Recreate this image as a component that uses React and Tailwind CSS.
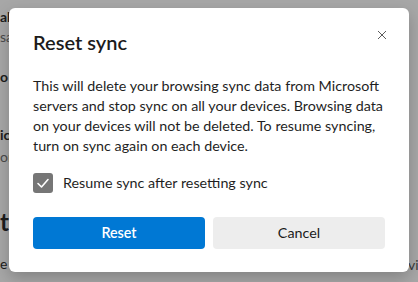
import React, { useState } from 'react';

function CloseIcon() {
  return (
    <svg width="10" height="10" viewBox="0 0 10 10" fill="none">
      <path d="M1 1L9 9M9 1L1 9" stroke="#5c5c5c" strokeWidth="1" />
    </svg>
  );
}

function CheckIcon() {
  return (
    <svg width="14" height="14" viewBox="0 0 14 14" fill="none">
      <path d="M2 7.5L5.5 11L12 3.5" stroke="#ffffff" strokeWidth="1.6" strokeLinecap="round" strokeLinejoin="round" />
    </svg>
  );
}

export default function App() {
  const [resume, setResume] = useState(true);

  return (
    <div
      className="relative h-[282px] w-[418px] overflow-hidden bg-[#a7a7a7]"
      style={{ fontFamily: 'Lato, "Noto Sans", sans-serif' }}
    >
      {/* Settings page behind the overlay */}
      <div className="flex flex-col text-[14px] leading-[20px]">
        <div className="mt-[7px] font-bold text-[#1c1c1c]">al</div>
        <div className="text-[#4a4a4a]">sa</div>
        <div className="mt-[20px] font-bold text-[#1c1c1c]">o</div>
        <div className="mt-[4px] pl-[10px] text-[#4a4a4a]">P</div>
        <div className="mt-[14px] font-bold text-[#1c1c1c]">ic</div>
        <div className="mt-[2px] text-[#4a4a4a]">or</div>
        <div className="mt-[40px] text-[24px] leading-[30px] font-bold text-[#1c1c1c]">t</div>
        <div className="mt-[17px] text-[#1c1c1c]">e</div>
      </div>
      <div className="absolute left-[408px] top-[255px] text-[14px] leading-[20px] text-[#3a3a3a]">vi</div>

      {/* Dialog */}
      <div className="absolute left-[9px] top-[8px] w-[400px] rounded-[6px] bg-white px-[24px] pt-[20px] pb-[23px] shadow-[0_6px_16px_rgba(0,0,0,0.22)]">
        <button className="absolute right-[14px] top-[14px] flex h-[26px] w-[26px] items-center justify-center">
          <CloseIcon />
        </button>

        <h2 className="text-[20px] leading-[28px] font-semibold text-[#1b1b1b]">Reset sync</h2>

        <p className="mt-[20px] text-[14.3px] leading-[20px] text-[#1f1f1f]">
          This will delete your browsing sync data from Microsoft servers and stop sync on all your devices. Browsing data on your devices will not be deleted. To resume syncing, turn on sync again on each device.
        </p>

        <label className="mt-[17px] flex items-center gap-[10px] text-[14.3px] leading-[20px] text-[#1f1f1f]">
          <button
            onClick={() => setResume(!resume)}
            className={`flex h-[20px] w-[20px] items-center justify-center rounded-[3px] ${resume ? 'bg-[#767676]' : 'border border-[#767676] bg-white'}`}
          >
            {resume && <CheckIcon />}
          </button>
          <span>Resume sync after resetting sync</span>
        </label>

        <div className="mt-[24px] grid grid-cols-2 gap-[8px]">
          <button className="h-[32px] rounded-[4px] bg-[#0078d4] text-[14.3px] font-semibold text-white">Reset</button>
          <button className="h-[32px] rounded-[4px] bg-[#ededed] text-[14.3px] text-[#1b1b1b]">Cancel</button>
        </div>
      </div>
    </div>
  );
}
